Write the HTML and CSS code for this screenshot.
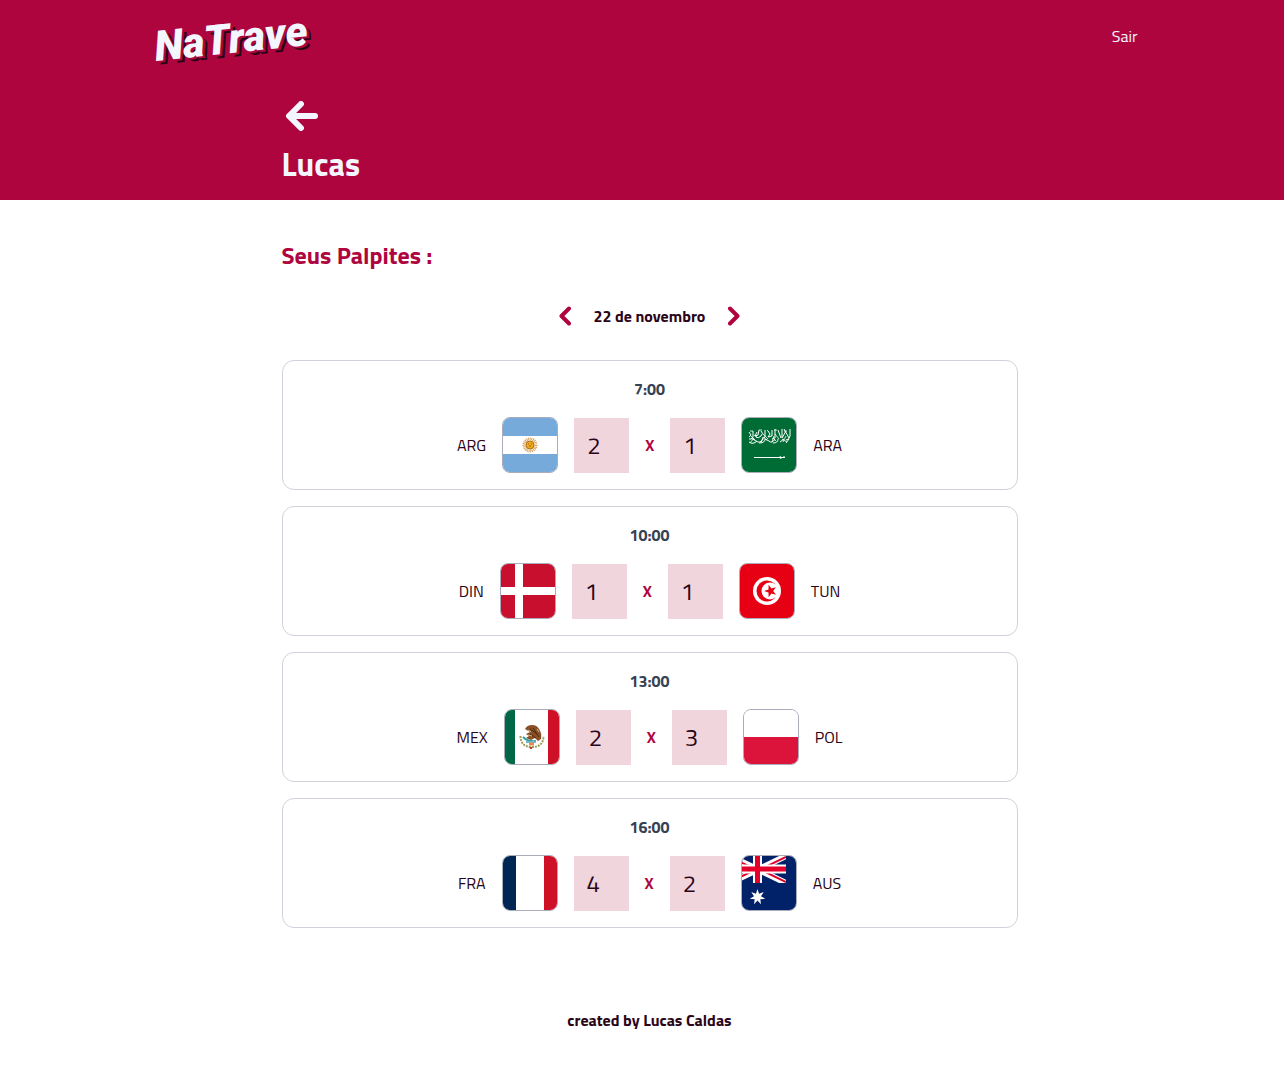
FILE: index.html
```html
<!DOCTYPE html>
<html lang="pt-BR">
<head>
  <meta charset="utf-8">
  <meta name="viewport" content="width=device-width, initial-scale=1">
  <title>NaTrave</title>
  <link rel="stylesheet" href="styles.css">
</head>
<body>
  <header class="header">
    <div class="topbar">
      <a class="logo" href="#">NaTrave</a>
      <a class="logout" href="#">Sair</a>
    </div>
    <div class="container profile">
      <a class="back" href="#" aria-label="Voltar">
        <svg width="32" height="30" viewBox="0 0 32 30" fill="none" stroke="currentColor" stroke-width="6" stroke-linecap="round" stroke-linejoin="round"><path d="M15 3 3 15l12 12M4 15h25"/></svg>
      </a>
      <h1 class="name">Lucas</h1>
    </div>
  </header>

  <main class="container">
    <h2 class="title">Seus Palpites :</h2>
    <div class="datebar">
      <button class="arrow" type="button" aria-label="Dia anterior">
        <svg width="14" height="20" viewBox="0 0 14 20" fill="none" stroke="currentColor" stroke-width="4" stroke-linecap="round" stroke-linejoin="round"><path d="M11 2.500 3.500 10l7.500 7.500"/></svg>
      </button>
      <span class="date">22 de novembro</span>
      <button class="arrow" type="button" aria-label="Próximo dia">
        <svg width="14" height="20" viewBox="0 0 14 20" fill="none" stroke="currentColor" stroke-width="4" stroke-linecap="round" stroke-linejoin="round"><path d="m3 2.500 7.500 7.500L3 17.500"/></svg>
      </button>
    </div>

    <div class="games">
      <section class="card">
        <span class="time">7:00</span>
        <form class="match">
          <label class="team" for="arg">ARG</label>
          <svg class="flag" viewBox="0 0 54 54">
            <path fill="#75aadb" d="M0 0h54v54H0z"/><path fill="#fff" d="M0 18h54v18H0z"/>
            <circle cx="27" cy="27" r="6" fill="none" stroke="#d9a866" stroke-width="3" stroke-dasharray="1 .6"/>
            <circle cx="27" cy="27" r="4" fill="#f0a81c" stroke="#b0701c"/>
            <path d="M25 26h1m2 0h1m-3 2h2" stroke="#8a5010" stroke-width=".8"/>
          </svg>
          <input class="score" id="arg" type="text" inputmode="numeric" value="2">
          <span class="versus">X</span>
          <input class="score" id="ara" type="text" inputmode="numeric" value="1">
          <svg class="flag" viewBox="0 0 54 54">
            <path fill="#006c35" d="M0 0h54v54H0z"/>
            <g fill="none" stroke="#fff">
              <path stroke-width="1" d="M7 14l2 3-2 2m4-6v6q-1 3-4 2m8-7-2 4 3-1 1-5m2 1q3 2 0 5t-5 1m9-7v7l-3 2m6-8 2 3-2 3 4-1v-6m3-1v9l-3 1m6-9 3 8m1-9v9l4-7m-2-2 5 9m1-9v7q-1 4-4 4M7 24q4 3 8-1m-6-3 5 3q4 3 7-2m-4 4q6 0 6-4l4 2q3 3 6-2m-2 4q5 0 5-4m2 3 4-3m2 4 3-4"/>
              <path stroke-width=".8" d="M8 13h3m6-1h3m5 0 2 2m5-2h3m7 1h3M12 17l3 2m6 0 4 3m6-2 3 3M9 18l4 4m8-6 5 5m7-5 4 5m3 0 5 3M8 25l4-5m7 5 2-6m9 5 2-6m9 6 3-6"/>
              <path stroke-width="1" d="M12 39.500h31M38 38l1 3m2-2h2"/>
            </g>
          </svg>
          <label class="team" for="ara">ARA</label>
        </form>
      </section>

      <section class="card">
        <span class="time">10:00</span>
        <form class="match">
          <label class="team" for="din">DIN</label>
          <svg class="flag" viewBox="0 0 54 54"><path fill="#c8102e" d="M0 0h54v54H0z"/><path fill="#fff" d="M14 0h8v54h-8zM0 23h54v8H0z"/></svg>
          <input class="score" id="din" type="text" inputmode="numeric" value="1">
          <span class="versus">X</span>
          <input class="score" id="tun" type="text" inputmode="numeric" value="1">
          <svg class="flag" viewBox="0 0 54 54">
            <path fill="#e70013" d="M0 0h54v54H0z"/><circle cx="27" cy="27" r="14" fill="#fff"/>
            <circle cx="27" cy="27" r="10.500" fill="#e70013"/><circle cx="30" cy="27" r="8.500" fill="#fff"/>
            <path fill="#e70013" d="m24 27 4.500-1.500.1-4.700 2.800 3.800 4.500-1.400-2.700 3.800 2.700 3.800-4.500-1.400-2.800 3.800-.1-4.700z"/>
          </svg>
          <label class="team" for="tun">TUN</label>
        </form>
      </section>

      <section class="card">
        <span class="time">13:00</span>
        <form class="match">
          <label class="team" for="mex">MEX</label>
          <svg class="flag" viewBox="0 0 54 54">
            <path fill="#fff" d="M0 0h54v54H0z"/><path fill="#006847" d="M0 0h10v54H0z"/><path fill="#ce1126" d="M43 0h11v54H43z"/>
            <path d="M15.500 26q0 11 11.500 11t11.500-11" fill="none" stroke="#9c9a58" stroke-width="2" stroke-dasharray="2 1"/>
            <path fill="#8a4f24" d="M20 19q2-4 7-4 5 0 7 4 3 4 2 10l-3 2-3-3-4 2-5-2 3-2-3-2 4-2z"/>
            <path d="m25 19 7 5m-4-6 6 9m-9-3 6 4" stroke="#4a2a14" fill="none"/>
            <path d="m23 20 3 2m-3 3 4 1m5-7 2 3" stroke="#d8b48a" fill="none"/>
            <path d="M18 27q5 5 13 4" stroke="#2e9f9a" stroke-width="2" fill="none"/>
            <path d="M21 32h10" stroke="#6fb9cf" stroke-width="2"/><path d="M24 34h5" stroke="#ee8844" stroke-width="3"/>
            <path d="M26 37v2" stroke="#b93a2b" stroke-width="2"/>
          </svg>
          <input class="score" id="mex" type="text" inputmode="numeric" value="2">
          <span class="versus">X</span>
          <input class="score" id="pol" type="text" inputmode="numeric" value="3">
          <svg class="flag" viewBox="0 0 54 54"><path fill="#fff" d="M0 0h54v54H0z"/><path fill="#dc143c" d="M0 27h54v27H0z"/></svg>
          <label class="team" for="pol">POL</label>
        </form>
      </section>

      <section class="card">
        <span class="time">16:00</span>
        <form class="match">
          <label class="team" for="fra">FRA</label>
          <svg class="flag" viewBox="0 0 54 54"><path fill="#fff" d="M0 0h54v54H0z"/><path fill="#002654" d="M0 0h13v54H0z"/><path fill="#ce1126" d="M41 0h13v54H41z"/></svg>
          <input class="score" id="fra" type="text" inputmode="numeric" value="4">
          <span class="versus">X</span>
          <input class="score" id="aus" type="text" inputmode="numeric" value="2">
          <svg class="flag" viewBox="0 0 54 54">
            <path fill="#012169" d="M0 0h54v54H0z"/>
            <svg width="44" height="27" viewBox="0 0 44 27">
              <path d="M-12 0 44 27M-12 27 44 0" stroke="#fff" stroke-width="6"/>
              <path d="M-12 1 16 14.500M16 12.500 44 26M-12 26l28-13.500M16 14.500 44 1" stroke="#e4002b" stroke-width="2"/>
              <path d="M15.500 0v27M0 13h44" stroke="#fff" stroke-width="9"/>
              <path d="M15.500 0v27M0 13h44" stroke="#e4002b" stroke-width="5"/>
            </svg>
            <path fill="#fff" d="m15.500 33 1.560 4.760 4.700-1.760L19 40.200l4.300 2.600-5 .44.700 4.960-3.500-3.600-3.500 3.600.7-4.960-5-.44 4.300-2.600L9.240 36l4.700 1.760z"/>
          </svg>
          <label class="team" for="aus">AUS</label>
        </form>
      </section>
    </div>
  </main>

  <footer class="footer">created by Lucas Caldas</footer>
</body>
</html>
```

FILE: styles.css
```css
* {
  box-sizing: border-box;
}

body {
  margin: 0;
  padding-left: 15px;
  background: #fff;
  color: #2b0417;
  font-family: "Titillium Web", Roboto, sans-serif;
  font-size: 16px;
  line-height: 24px;
}

a {
  color: inherit;
  text-decoration: none;
}

h1,
h2 {
  margin: 0;
}

svg {
  display: block;
}

.header {
  margin-left: -15px;
  padding: 16px 0 16px 15px;
  background: #af053f;
  color: #f4f6ff;
}

.topbar {
  display: flex;
  justify-content: space-between;
  align-items: flex-start;
  max-width: 1024px;
  height: 50px;
  margin: 0 auto;
  padding: 0 24px 0 16px;
}

.logo {
  font: italic 900 42px/46px Roboto, sans-serif;
  text-shadow: 2px 2px #af053f, 4px 4px #2b0417;
  transform: rotate(-6deg);
}

.logout {
  padding-top: 8px;
}

.container {
  max-width: 768px;
  margin: 0 auto;
  padding: 0 16px;
}

.profile {
  padding-top: 35px;
}

.back {
  display: block;
  width: 40px;
  padding: 0 4px;
}

.name {
  margin-top: 13px;
  font-size: 32px;
  line-height: 40px;
}

.title {
  padding-top: 40px;
  color: #af053f;
  font-size: 24px;
  line-height: 30px;
}

.datebar {
  display: flex;
  justify-content: center;
  align-items: center;
  gap: 22px;
  padding: 34px 0 32px;
}

.arrow {
  padding: 0;
  border: 0;
  background: none;
  color: #af053f;
}

.date {
  font-weight: 700;
}

.games {
  display: grid;
  gap: 16px;
}

.card {
  display: grid;
  gap: 16px;
  padding: 16px;
  border: 1px solid #d1d1dc;
  border-radius: 12px;
  text-align: center;
}

.time {
  color: #374151;
  font-weight: 700;
}

.match {
  display: flex;
  justify-content: center;
  align-items: flex-end;
  gap: 16px;
}

.team,
.versus {
  line-height: 56px;
}

.versus {
  color: #af053f;
  font-weight: 700;
}

.flag {
  width: 56px;
  height: 56px;
  border: 1px solid #a9adbb;
  border-radius: 8px;
}

.score {
  width: 55px;
  height: 55px;
  padding: 0 13px 2px;
  border: 0;
  background: #f0d5dc;
  color: #2b0417;
  font: inherit;
  font-size: 24px;
}

.footer {
  padding: 80px 0 40px;
  font-weight: 700;
  text-align: center;
}
```
